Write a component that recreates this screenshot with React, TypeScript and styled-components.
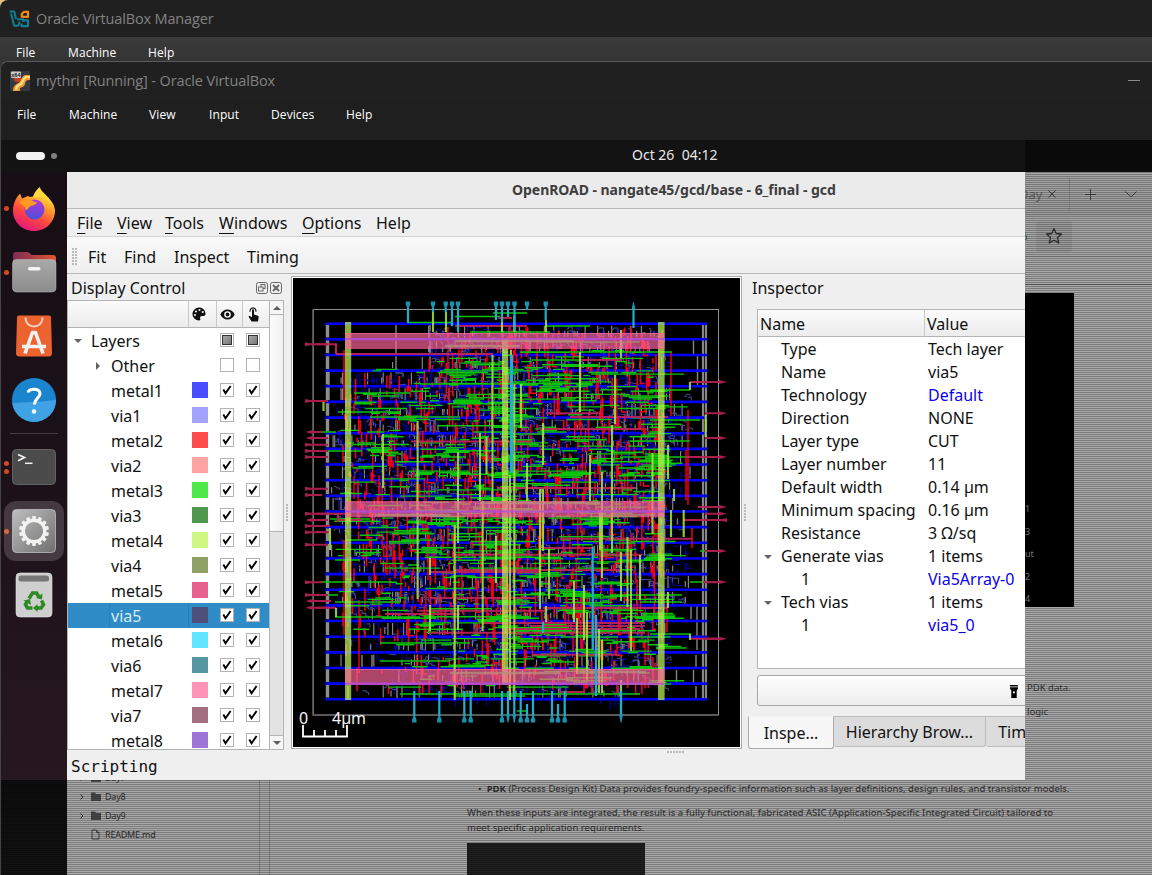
import React from 'react';
import styled, { createGlobalStyle, css } from 'styled-components';

const Global = createGlobalStyle`
  *, *::before, *::after { box-sizing: border-box; }
  html, body { margin: 0; padding: 0; }
  body { font-family: "Noto Sans", "Open Sans", sans-serif; background: #202020; overflow: hidden; }
`;

/* ---------- host windows ---------- */

const Screen = styled.div`
  width: 1152px;
  height: 875px;
  display: flex;
  flex-direction: column;
  overflow: hidden;
  background: linear-gradient(135deg, #e8c07a 0 8px, #353535 8px);
`;

const HostTitle = styled.div<{ $h: number; $pad: number }>`
  height: ${p => p.$h}px;
  flex: none;
  display: flex;
  align-items: center;
  gap: 6px;
  padding-left: ${p => p.$pad}px;
  background: #202020;
  border-top-left-radius: 8px;
  color: #828282;
  font-family: "Open Sans", "Noto Sans", sans-serif;
  font-size: 14.5px;
  white-space: nowrap;
`;

const HostTitleText = styled.span<{ $ls: number }>`
  letter-spacing: ${p => p.$ls}px;
`;

const MinimizeMark = styled.span`
  width: 12px;
  height: 1px;
  background: #8a8a8a;
  margin: 0 12px 0 auto;
`;

const HostMenu = styled.div<{ $h: number; $pad: number; $top: number; $raised?: boolean }>`
  height: ${p => p.$h}px;
  flex: none;
  display: flex;
  align-items: flex-start;
  padding: ${p => p.$top}px 0 0 ${p => p.$pad}px;
  background: ${p => (p.$raised ? 'linear-gradient(#3b3b3b, #343434)' : '#1f1f1f')};
  color: #fff;
  font-family: "Open Sans", "Noto Sans", sans-serif;
  font-size: 12px;
  letter-spacing: 0.1px;
  line-height: 16px;
  white-space: nowrap;
`;

const HostMenuItem = styled.span<{ $w: number }>`
  width: ${p => p.$w}px;
  flex: none;
`;

const VmWindow = styled.div`
  flex: 1;
  min-height: 0;
  display: flex;
  flex-direction: column;
  border-top: 1px solid #5a5a5a;
  border-left: 1px solid #454545;
  border-top-left-radius: 8px;
  background: #202020;
  overflow: hidden;
`;

/* ---------- guest desktop ---------- */

const scanlines = css`
  position: relative;
  overflow: hidden;
  &::after {
    content: '';
    position: absolute;
    inset: 0;
    background: repeating-linear-gradient(rgba(0, 0, 0, 0.27) 0 1px, transparent 1px 2px);
    pointer-events: none;
  }
`;

const GuestTopBar = styled.div`
  height: 32px;
  flex: none;
  display: flex;
`;

const TopBarMain = styled.div`
  width: 1024px;
  background: #131313;
  display: flex;
  align-items: center;
  padding-left: 15px;
  color: #e8e8e8;
  font-size: 14px;
`;

const TopBarStale = styled.div`
  flex: 1;
  background: #0b0b0b;
  ${scanlines}
`;

const Pill = styled.span`
  width: 29px;
  height: 8px;
  border-radius: 4px;
  background: #f2f2f2;
`;

const Dot = styled.span`
  width: 6px;
  height: 6px;
  border-radius: 3px;
  background: #808080;
  margin-left: 6px;
`;

const Clock = styled.span`
  margin-left: 575px;
  white-space: pre;
  padding-bottom: 3px;
`;

const GuestUpper = styled.div`
  height: 608px;
  flex: none;
  display: flex;
`;

const GuestLower = styled.div`
  height: 95px;
  flex: none;
  display: flex;
`;

const Dock = styled.div`
  width: 66px;
  flex: none;
  padding-top: 4px;
  background: linear-gradient(#170f15, #1a1017 40%, #27171f);
`;

const DockCell = styled.div`
  height: 64px;
  display: flex;
  align-items: center;
`;

const DockMarks = styled.div`
  width: 11px;
  padding-left: 3px;
  display: flex;
  flex-direction: column;
  gap: 3px;
`;

const DockMark = styled.span`
  width: 5px;
  height: 5px;
  border-radius: 3px;
  background: #d9481c;
`;

const DockIcon = styled.div<{ $active?: boolean }>`
  width: ${p => (p.$active ? 60 : 44)}px;
  height: ${p => (p.$active ? 60 : 44)}px;
  margin-left: ${p => (p.$active ? -8 : 0)}px;
  border-radius: 12px;
  background: ${p => (p.$active ? 'rgba(255,255,255,0.17)' : 'none')};
  display: grid;
  place-items: center;
  svg { display: block; overflow: visible; }
`;

const DockRule = styled.div`
  height: 1px;
  margin: 1px 9px;
  background: #453c42;
`;

const DockFaded = styled.div`
  width: 66px;
  flex: none;
  background: linear-gradient(#0d0d0d, #121212);
  ${scanlines}
`;

/* ---------- stale browser content ---------- */

const StaleSide = styled.div`
  flex: 1;
  background: #a8a8a8;
  ${scanlines}
  display: flex;
  flex-direction: column;
  color: #3a3a3a;
`;

const StaleTabs = styled.div`
  height: 44px;
  display: flex;
  align-items: center;
  background: linear-gradient(#a6a6a6, #9c9c9c);
  color: #666;
  font-size: 13px;
  svg { flex: none; }
`;

const StaleTab = styled.div`
  width: 45px;
  height: 36px;
  display: flex;
  align-items: center;
  gap: 6px;
  border-right: 1px solid #8c8c8c;
  border-radius: 0 4px 4px 0;
  overflow: hidden;
`;

const TabLabel = styled.span`
  margin-left: -6px;
`;

const StaleAddress = styled.div`
  height: 40px;
  display: flex;
  align-items: center;
  font-size: 10px;
  background: #a6a6a6;
`;

const StarBox = styled.div`
  width: 36px;
  height: 31px;
  margin-left: 9px;
  background: #9b9b9b;
  border-radius: 3px;
  display: grid;
  place-items: center;
`;

const StaleBlack = styled.div`
  width: 49px;
  height: 314px;
  background: #000;
  color: #777;
  font-size: 9px;
  line-height: 12px;
  position: relative;
  z-index: 1;
  padding-top: 210px;
  display: flex;
  flex-direction: column;
  gap: 10.5px;
`;

const StaleGap = styled.div`
  height: 37px;
  border-top: 1px solid #8f8f8f;
  border-bottom: 0;
  padding-top: 27px;
  &::before { content: ''; display: block; height: 1px; background: #707070; }
`;

const StaleNote = styled.div<{ $top: number }>`
  margin: ${p => p.$top}px 0 0 2px;
  font-size: 9.5px;
  line-height: 12px;
  white-space: nowrap;
`;

const StaleBottom = styled.div`
  flex: 1;
  background: #a8a8a8;
  ${scanlines}
  display: flex;
  color: #303030;
`;

const FileTree = styled.div`
  width: 193px;
  border-right: 1px solid #868686;
  margin-top: -12px;
  font-size: 9px;
  letter-spacing: -0.2px;
`;

const FileRow = styled.div`
  height: 19px;
  display: flex;
  align-items: center;
  padding-left: 12px;
`;

const FileGlyph = styled.span<{ $w: number }>`
  width: ${p => p.$w}px;
  display: flex;
`;

const Gutter = styled.div`
  width: 10px;
  border-right: 1px solid #868686;
`;

const Article = styled.div`
  padding-left: 197px;
  font-size: 9.5px;
  line-height: 15px;
  letter-spacing: 0.04px;
  white-space: nowrap;
`;

const Bullet = styled.div`
  padding: 1px 0 0 11px;
`;

const Para = styled.div`
  padding-top: 9px;
`;

const CodeBlock = styled.div`
  width: 178px;
  height: 40px;
  margin-top: 8px;
  background: #202020;
`;

/* ---------- OpenROAD window ---------- */

const AppWindow = styled.div`
  width: 958px;
  flex: none;
  background: #efefef;
  overflow: hidden;
  display: flex;
  flex-direction: column;
  color: #111;
  font-size: 16px;
  white-space: nowrap;
`;

const AppTitle = styled.div`
  height: 37px;
  flex: none;
  background: #ebebeb;
  border-bottom: 1px solid #b9b9b9;
  color: #3d3d3d;
  font-size: 14px;
  font-weight: 700;
  letter-spacing: -0.05px;
  line-height: 35px;
  padding-left: 445px;
`;

const AppMenu = styled.div`
  height: 28px;
  flex: none;
  display: flex;
  padding: 2px 0 0 10px;
  line-height: 24px;
  border-bottom: 1px solid #d2d2d2;
  u { text-decoration-thickness: 1px; text-underline-offset: 4px; }
`;

const Pitch = styled.span<{ $w: number }>`
  width: ${p => p.$w}px;
  flex: none;
`;

const AppTools = styled.div`
  height: 37px;
  flex: none;
  display: flex;
  align-items: center;
  line-height: 32px;
  padding-top: 3px;
  background: linear-gradient(#f9f9f9, #eee);
  border-bottom: 1px solid #b9b9b9;
`;

const Grip = styled.span<{ $w: number; $h: number }>`
  width: ${p => p.$w}px;
  height: ${p => p.$h}px;
  background: radial-gradient(circle at 1px 1px, #b9b9b9 0.7px, transparent 0.9px) 0 0 / 3px 3px;
`;

const AppBody = styled.div`
  height: 476px;
  flex: none;
  display: flex;
`;

const LeftPane = styled.div`
  width: 217px;
  flex: none;
  display: flex;
  flex-direction: column;
`;

const PaneHead = styled.div`
  height: 26px;
  flex: none;
  display: flex;
  align-items: center;
  gap: 2px;
  padding: 2px 2px 0 4px;
`;

const PaneTitle = styled.span`
  flex: 1;
`;

const Tree = styled.div`
  flex: 1;
  min-height: 0;
  display: flex;
  border: 1px solid #b4b4b4;
  background: #fff;
  overflow: hidden;
`;

const TreeMain = styled.div`
  width: 201px;
  flex: none;
`;

const TreeHead = styled.div`
  height: 27px;
  display: flex;
  background: linear-gradient(#fbfbfb, #ececec);
  border-bottom: 1px solid #b4b4b4;
`;

const TreeHeadCell = styled.div<{ $w: number; $last?: boolean }>`
  width: ${p => p.$w}px;
  flex: none;
  border-right: ${p => (p.$last ? 'none' : '1px solid #c8c8c8')};
  display: flex;
  align-items: center;
  padding-left: ${p => (p.$last ? 5 : 3)}px;
`;

const LayerRow = styled.div<{ $sel?: boolean }>`
  height: 25px;
  display: flex;
  align-items: flex-start;
  background: ${p => (p.$sel ? '#308cc6' : 'transparent')};
  color: ${p => (p.$sel ? '#d8ecfa' : '#111')};
`;

const LayerName = styled.span<{ $indent: number; $sel?: boolean }>`
  width: 121px;
  flex: none;
  height: 25px;
  line-height: 26px;
  display: flex;
  align-items: center;
  padding-left: ${p => p.$indent}px;
  ${p => p.$sel && css`
    background: linear-gradient(90deg, transparent 41px, #2a7fb5 41px 42px, transparent 42px 120px, #2a7fb5 120px);
  `}
`;

const Arrow = styled.span<{ $open?: boolean; $space: number }>`
  width: ${p => p.$space}px;
  flex: none;
  &::before {
    content: '';
    display: block;
    width: 0;
    height: 0;
    border-style: solid;
    border-color: transparent;
    ${p => p.$open
      ? css`border-width: 4px 4px 0; border-top-color: #636363;`
      : css`border-width: 4px 0 4px 4px; border-left-color: #636363; margin-left: 1px;`}
  }
`;

const SwatchCell = styled.span<{ $c?: string }>`
  width: 16px;
  height: 16px;
  margin: 4px 12px 0 3px;
  flex: none;
  background: ${p => p.$c || 'transparent'};
`;

const CheckBox = styled.span`
  width: 14px;
  height: 14px;
  margin: 5px 12px 0 0;
  flex: none;
  background: #fff;
  border: 1px solid #b3b3b3;
  display: grid;
  place-items: center;
`;

const PartialMark = styled.span`
  width: 10px;
  height: 10px;
  border: 1px solid #333;
  background: linear-gradient(135deg, #a8a8a8, #777);
`;

const ScrollBar = styled.div`
  flex: 1;
  border-left: 1px solid #b4b4b4;
  display: flex;
  flex-direction: column;
  background: #e3e3e3;
`;

const ScrollStep = styled.div<{ $up?: boolean }>`
  height: 14px;
  flex: none;
  display: flex;
  justify-content: center;
  align-items: center;
  background: #f6f6f6;
  border: 0 solid #b4b4b4;
  border-bottom-width: ${p => (p.$up ? 1 : 0)}px;
  border-top-width: ${p => (p.$up ? 0 : 1)}px;
  &::before {
    content: '';
    border: 4px solid transparent;
    border-top-width: ${p => (p.$up ? 0 : 4)}px;
    border-bottom-width: ${p => (p.$up ? 4 : 0)}px;
    border-bottom-color: ${p => (p.$up ? '#5c5c5c' : 'transparent')};
    border-top-color: ${p => (p.$up ? 'transparent' : '#5c5c5c')};
  }
`;

const ScrollThumb = styled.div`
  height: 217px;
  background: linear-gradient(90deg, #fcfcfc, #f0f0f0);
  border-bottom: 1px solid #b4b4b4;
`;

const ScrollTrack = styled.div`
  flex: 1;
`;

const SplitHandle = styled.div<{ $w: number }>`
  width: ${p => p.$w}px;
  flex: none;
  display: flex;
  align-items: center;
  justify-content: center;
`;

const CanvasFrame = styled.div`
  width: 451px;
  height: 473px;
  margin-top: 2px;
  flex: none;
  border: 1px solid #aaa;
  padding: 1px;
  background: #fff;
`;

const CanvasInner = styled.div`
  width: 447px;
  height: 469px;
  background: #000;
  svg { display: block; }
`;

const RightPane = styled.div`
  flex: none;
  width: 330px;
  display: flex;
  flex-direction: column;
`;

const InspectorHead = styled.div`
  height: 35px;
  padding: 2px 0 0 4px;
  line-height: 25px;
`;

const PropTable = styled.div`
  margin-left: 9px;
  height: 360px;
  border: 1px solid #b4b4b4;
  background: #fff;
`;

const PropHead = styled.div`
  height: 27px;
  display: flex;
  line-height: 28px;
  background: linear-gradient(#fbfbfb, #ececec);
  border-bottom: 1px solid #b4b4b4;
  margin-bottom: 1px;
`;

const PropHeadCell = styled.div<{ $w: number }>`
  width: ${p => p.$w}px;
  flex: none;
  padding-left: 2px;
  border-right: 1px solid #c8c8c8;
`;

const PropRow = styled.div`
  height: 23px;
  display: flex;
  line-height: 23px;
`;

const PropName = styled.div<{ $indent: number }>`
  width: 170px;
  padding-left: ${p => p.$indent}px;
  display: flex;
  align-items: center;
`;

const PropValue = styled.div<{ $link?: boolean }>`
  color: ${p => (p.$link ? '#0c00f0' : '#111')};
`;

const ActionButton = styled.div`
  height: 31px;
  margin: 6px 0 0 9px;
  border: 1px solid #a9a9a9;
  border-radius: 3px;
  background: linear-gradient(#fff, #ededed);
  padding: 6px 0 0 251px;
  flex: none;
`;

const TabStrip = styled.div`
  display: flex;
  margin-top: 10px;
  height: 33px;
`;

const PaneTab = styled.div<{ $w: number; $on?: boolean }>`
  width: ${p => p.$w}px;
  height: ${p => (p.$on ? 33 : 31)}px;
  line-height: ${p => (p.$on ? 32 : 30)}px;
  flex: none;
  text-align: center;
  border: 1px solid ${p => (p.$on ? '#aaa' : '#bcbcbc')};
  border-top-color: ${p => (p.$on ? '#f4f4f4' : '#bcbcbc')};
  border-left-width: ${p => (p.$on ? 1 : 0)}px;
  border-radius: 0 0 3px 3px;
  background: ${p => (p.$on ? '#f7f7f7' : '#dcdcdc')};
  overflow: hidden;
`;

const ScriptingBar = styled.div`
  flex: 1;
  display: flex;
  align-items: flex-start;
  justify-content: space-between;
  padding: 1px 341px 0 4px;
  font-family: "DejaVu Sans Mono", "Liberation Mono", monospace;
  font-size: 16px;
  line-height: 32px;
`;

/* ---------- chip drawing ---------- */

function rng(seed: number) {
  let s = seed;
  return () => {
    s ^= s << 13;
    s ^= s >>> 17;
    s ^= s << 5;
    return (s >>> 0) / 4294967296;
  };
}

const ROW_Y = (i: number) => 323.7 + i * 15.65;
const TRACK = 1.565;
const snap = (v: number, o: number) => o + Math.round((v - o) / TRACK) * TRACK;

type Seg = [number, number, number];

function density(x: number, y: number) {
  if (x < 428 && y < 368) return 0;
  if (x < 338 && y > 560) return 0;
  if (x > 690) return 0;
  if (x > 666 && (y < 395 || y > 605)) return 0;
  if (x > 666) return 0.35;
  if (x < 390 && y > 640) return 0.12;
  if (y > 686 && x > 628) return 0;
  const dx = (x - 530) / 200;
  const dy = (y - 495) / 215;
  const d = dx * dx + dy * dy;
  return Math.max(0.15, Math.min(1, 1.3 - d * 0.8));
}

function scatter(seed: number, n: number, x0: number, x1: number, y0: number, y1: number, emit: (x: number, y: number, r: () => number) => string) {
  const r = rng(seed);
  let out = '';
  for (let i = 0; i < n; i++) {
    const x = x0 + r() * (x1 - x0);
    const y = y0 + r() * (y1 - y0);
    if (r() < density(x, y)) out += emit(x, y, r);
  }
  return out;
}

const f = (n: number) => n.toFixed(1);

const grays = scatter(1181, 1500, 331, 692, 324, 698, (x, y, r) => {
  const row = Math.floor((y - 323.7) / 15.65);
  const full = r() < 0.5;
  return `M${f(snap(x, 330))} ${f(ROW_Y(row) + (full ? 2 : 7))}v${full ? 12 : 6}`;
});
const navy = scatter(2357, 4800, 338, 688, 326, 698, (x, y, r) =>
  r() < 0.65 ? `M${f(snap(x, 330))} ${f(y)}v${f(4 + r() * 8)}` : `M${f(x)} ${f(y)}h${f(2 + r() * 7)}`);
const slate = scatter(3779, 1300, 333, 688, 328, 694, (x, y, r) =>
  `M${f(x)} ${f(y)}h${f(1 + r() * 4)}v${f(r() * 6 - 3)}h${f(1 + r() * 4)}v${f(r() * 6)}`);
const reds = scatter(4111, 1250, 343, 664, 326, 686, (x, y, r) => {
  const len = 4 + r() * r() * 34;
  return `M${f(snap(x, 343))} ${f(y)}V${f(Math.min(y + len, 694))}${r() < 0.12 ? `h${f(2 + r() * 5)}` : ''}`;
});
const greens = scatter(5903, 620, 334, 650, 350, 690, (x, y, r) =>
  `M${f(x)} ${f(snap(y, 324))}h${f(Math.min(5 + r() * r() * 62, 690 - x))}`)
  + scatter(6701, 130, 345, 645, 355, 688, (x, y, r) => {
    let s = '';
    const k = 2 + Math.floor(r() * 3);
    for (let i = 0; i < k; i++) s += `M${f(x + r() * 16)} ${f(snap(y + i * TRACK, 324))}h${f(8 + r() * 26)}`;
    return s;
  });

const longGreens: Seg[] = [
  [322.5, 408, 451], [393, 354, 410], [417, 370, 460], [316.5, 455, 500], [434, 500, 545], [451, 320, 362],
  [488, 510, 527], [582, 320, 392], [432, 316, 336], [551, 700, 716], [582, 690, 710], [390, 650, 690],
  [342, 545, 640], [352, 520, 672], [493.5, 340, 362], [634, 650, 691], [643, 380, 470], [694, 400, 640],
  [696, 455, 525], [661, 380, 450], [313, 493, 527], [332, 470, 550], [457, 620, 690], [441, 630, 690],
  [412, 338, 400], [519, 330, 370], [560, 335, 360], [602, 335, 400], [617, 335, 420], [711, 517, 527],
  [326, 545, 590], [384, 420, 500], [602, 640, 682], [595, 610, 682], [420, 650, 700], [595, 318, 338],
];

const limes: Seg[] = [
  [433, 312, 332], [446, 312, 332], [492.5, 355, 501], [417.6, 421, 599], [383, 434, 488], [458, 452, 543],
  [480, 433, 501], [486.5, 437, 474], [323.5, 401, 411], [514.3, 384, 700], [330, 528, 550], [454.7, 525, 700],
  [482.7, 501, 631], [430, 558, 575], [430, 605, 631], [336, 608, 617], [510, 475, 700], [496, 536, 583],
  [521, 384, 428], [543, 423, 465], [580, 352, 412], [615, 375, 424], [612, 425, 553], [527, 463, 501],
  [590, 455, 501], [602, 472, 578], [652.5, 453, 534], [668, 445, 479], [705.7, 415, 437], [674, 489, 501],
  [621, 330, 358], [690, 382, 390], [540, 489, 609], [549, 549, 599], [543, 489, 551], [600, 510, 550],
  [621, 552, 601], [627.5, 537, 607], [631, 550, 651], [640, 555, 600], [574, 581, 622], [584, 585, 640],
  [577, 618, 674], [587, 612, 680], [599, 629, 693], [602, 640, 693], [546, 606, 622], [668, 592, 608],
  [683.7, 510, 537], [671, 510, 537], [690, 634, 640], [621, 680, 714], [511, 350, 470], [458, 605, 630],
  [514.3, 316, 332], [502, 316, 332], [546, 320, 332],
];

const crimsons: Seg[] = [
  [354, 336, 493], [344.3, 316, 337], [441.5, 411, 530], [326, 455, 527], [318, 498, 512], [413.3, 546, 603],
  [417, 570, 668], [429, 540, 643], [360, 579, 622], [488, 498, 636], [382, 690, 718], [507, 698, 718],
  [520, 683, 718], [457, 685, 718], [554.7, 452, 642], [572, 430, 540], [570, 453, 622], [598, 430, 535],
  [610.7, 417, 545], [614, 385, 460], [632.7, 430, 645], [623, 483, 645], [538.7, 560, 692], [548, 543, 592],
  [608, 543, 668], [654.7, 532, 620], [692, 560, 585], [638.7, 690, 718], [626, 530, 645], [629, 510, 640],
  [513.7, 316, 345], [520, 338, 362], [526, 316, 330], [532, 316, 330], [582.3, 703, 718], [601, 316, 331], [607.7, 316, 336],
];

const topPins: Seg[] = [
  [408, 308, 323], [433, 308, 312], [445.7, 308, 312], [452, 308, 326], [458, 308, 332], [496, 308, 320],
  [502, 308, 322], [508, 308, 317], [514.5, 308, 331], [527, 303, 310], [545.7, 308, 320],
];
const bottomPins: { x: number; down?: boolean }[] = [
  { x: 414.3 }, { x: 439.3 }, { x: 464.3 }, { x: 470.7 }, { x: 502 }, { x: 508, down: true }, { x: 514.3, down: true },
  { x: 520.7 }, { x: 527 }, { x: 533 }, { x: 552 }, { x: 558 }, { x: 564.7 }, { x: 621, down: true },
];
const leftPins = [344.3, 401, 432, 438, 444.7, 451, 457, 488.7, 495, 513.7, 520, 526, 532.3, 544.7, 582.3, 595, 601, 607.7];
const rightPins = [382, 413.3, 438, 457, 507, 513.7, 520, 551, 582, 638.7];
const outwardLeft = new Set([432, 438, 520, 601, 607.7]);

const hPath = (list: Seg[]) => list.map(([y, a, b]) => `M${a} ${y}H${b}`).join('');
const vPath = (list: Seg[]) => list.map(([x, a, b]) => `M${x} ${a}V${b}`).join('');

function ChipLayout() {
  const rows = Array.from({ length: 25 }, (_, i) => ROW_Y(i));
  return (
    <svg width="447" height="469" viewBox="293 278 447 469" fill="none">
      <rect x="313.5" y="309.5" width="405" height="405.5" stroke="#8d8d8d" strokeWidth="1" />
      <path d="M313 309V715H718" stroke="#5f5f5f" strokeWidth="1.6" />
      <path d="M327.5 324V699" stroke="#8e8e8e" strokeWidth="3.4" strokeDasharray="13.6 2.05" />
      <path d="M703 324V699M706 324V699" stroke="#858589" strokeWidth="2.2" />
      <path d="M396 325V369M430 325V369M693.5 340V354M697.500 356V385M691 605V619M697 605V650M696 655V667M693.500 670V683M676.500 670V683M696 686V698M329 370V400M362 655V667M372 655V667M348 686V698M397 686V698" stroke="#858589" strokeWidth="1.4" />
      <path d={grays} stroke="#83838b" strokeWidth="1.2" />
      <path d={navy} stroke="#0000a4" strokeWidth="1.1" />
      <path d={slate} stroke="#50509c" strokeWidth="0.9" />
      <path d={rows.map(y => `M325.5 ${f(y)}H707`).join('')} stroke="#0000fa" strokeWidth="2.6" />
      <path d={reds} stroke="#f20010" strokeWidth="1.5" />
      <path d="M671 352V416M688 410V505M686 450V500M667 600V632M344 350V400M344 540V635M358 480V520M359 600V673M428 545V580M395 550V578M387 530V575M692 528V548" stroke="#e80012" strokeWidth="1.5" />
      <path d={greens + hPath(longGreens)} stroke="#08c405" strokeWidth="1.4" />
      <path d={hPath(crimsons)} stroke="#c02257" strokeWidth="2" opacity="0.92" />
      <path d="M336 344V354M338 513V522" stroke="#c02257" strokeWidth="2" />
      <path d={vPath(limes)} stroke="#a4e33f" strokeWidth="2.1" opacity="0.88" />
      <rect x="345" y="322" width="6.2" height="378" fill="#c4f955" opacity="0.7" />
      <rect x="502" y="338" width="6.2" height="347" fill="#c4f955" opacity="0.7" />
      <rect x="658" y="322" width="6.6" height="378" fill="#c4f955" opacity="0.7" />
      {[333, 501.3, 669].map(y => (
        <g key={y}>
          <rect x="345" y={y} width="319.5" height="16" fill="#ff6699" opacity="0.68" />
          <path d={`M345 ${y + 0.5}H664.5`} stroke="#ff6e9c" strokeWidth="1" opacity="0.6" />
        </g>
      ))}
      <path d="M345 339H664M345 683.8H664M345 511.5H664" stroke="#b44fd0" strokeWidth="2" opacity="0.85" />
      <path d="M455 341H574M445 346H520M450 673H560M580 672H646M480 503H600M375 515H450" stroke="#b8907a" strokeWidth="2.4" opacity="0.75" />
      <g stroke="#1fb0d0" strokeWidth="2.2">
        <path d={vPath(topPins)} />
        <path d={bottomPins.map(p => `M${p.x} ${p.x === 527 || p.x === 558 ? 704 : 691}V716`).join('')} />
        <path d="M633.5 306V328M543 622V633" />
        <path d="M511.5 355V473" strokeWidth="3" />
        <path d="M592.7 547V650M596 615V696" />
      </g>
      <g fill="#1b93ae">
        {topPins.map(([x]) => <path key={x} d={`M${x - 2.2} 301.5h4.4v3l-1.6 4h-1.2l-1.6-4z`} />)}
        {bottomPins.map(({ x, down }) => (
          <path key={x} d={down ? `M${x - 2} 714h4l-1.5 8.5h-1z` : `M${x - 2.2} 722.5h4.4v-3l-1.6-4h-1.2l-1.6 4z`} />
        ))}
        <path d="M631.8 309l1.2-7h.8l1.4 7z" />
      </g>
      <path d={[...leftPins.map(y => `M308 ${y}H${[495, 582.3, 432].includes(y) ? 322 : 328}`), ...rightPins.map(y => `M705 ${y}H721`)].join('')} stroke="#a81d4c" strokeWidth="1.9" />
      <g fill="#a81d4c">
        {leftPins.map(y => (
          <path key={y} d={outwardLeft.has(y) ? `M305.5 ${y}l7-2v4z` : `M305 ${y - 2}l7 1.6v.8l-7 1.6z`} />
        ))}
        {rightPins.map(y => (
          <path key={y} d={y === 520 ? `M727 ${y - 2}l-8 1.6v.8l8 1.6z` : `M727 ${y}l-8-2v4z`} />
        ))}
      </g>
      <path d="M303 725V736.500H347V725M314 730V736M325 730V736M336 730V736" stroke="#fff" strokeWidth="1.8" />
      <text x="299" y="724" fill="#f4f4f4" fontFamily="Noto Sans, sans-serif" fontSize="16">0</text>
      <text x="332" y="724" fill="#f4f4f4" fontFamily="Noto Sans, sans-serif" fontSize="16">4µm</text>
    </svg>
  );
}

/* ---------- icons ---------- */

const VirtualBoxLogo = () => (
  <svg width="21" height="18" viewBox="0 0 21 18" fill="none" strokeLinejoin="round">
    <path d="M0.800 1.500h4.400l1.800 7.500M2 3.500l3.200 12.300h4.300M8 9.200h6v2.500M9.500 15.800l1.200-4.300" stroke="#0c7f92" strokeWidth="2" />
    <path d="M14 10.300h5v5.800h-6.400v-2.600" stroke="#0c7f92" strokeWidth="2.200" />
    <path d="M12.800 6.700V4l2.200-2.200h4v5z" stroke="#f08b17" strokeWidth="2.200" />
  </svg>
);

const VmLogo = () => (
  <svg width="20" height="20" viewBox="0 0 20 20">
    <rect width="20" height="20" fill="#36393f" />
    <circle cx="7.500" cy="7.500" r="3.500" fill="#c9401c" />
    <path d="M3 20c0-5 3-7 5.500-8C11 10.500 11.500 5 15 4h5v5c-4 0-4.500 1.500-5 4-.6 3-3 3-5 4v3z" fill="#f29a2e" />
    <path d="M6 19c0-4 3-5 5-6 2-1.500 2-6 5-7h4" stroke="#ffe08a" strokeWidth="2.200" fill="none" />
    <rect x="1" y="0.500" width="10" height="6.500" rx="1" fill="#c9c9c9" />
    <text x="1.300" y="6" fontSize="5.500" fontWeight="700" fontFamily="Liberation Sans, sans-serif" fill="#222">x64</text>
  </svg>
);

const FirefoxIcon = () => (
  <svg width="44" height="49" viewBox="0 0 44 49">
    <defs>
      <linearGradient id="ffA" x1="0.8" y1="0" x2="0.3" y2="1">
        <stop offset="0.1" stopColor="#fff04d" /><stop offset="0.35" stopColor="#ffa72c" />
        <stop offset="0.65" stopColor="#ff4a3d" /><stop offset="1" stopColor="#e2147f" />
      </linearGradient>
      <linearGradient id="ffB" x1="0.5" y1="0" x2="0.4" y2="1">
        <stop offset="0" stopColor="#b437dc" /><stop offset="1" stopColor="#4a50d8" />
      </linearGradient>
    </defs>
    <path d="M22 45C10 45 1 36 1 24.500 1 18 3.500 12.500 8 7.500l2 5 6-2.500 2 1 3-.5c1-3 3.500-7 7-9.500 0 5 5 7.500 8 10.500 4 4 6.500 7.500 7 13C43 36 34 45 22 45z" fill="url(#ffA)" />
    <circle cx="22.500" cy="23.500" r="10" fill="url(#ffB)" />
    <path d="M7.500 17c2-3.500 6.500-4.500 10-3.500 3 .8 4 2.500 7.500 2.800-1 3-4.500 3.200-7 4.200-2 1-1.500 3.500-4.500 3.500C14 22 11 18 7.500 17z" fill="#ff9a22" />
    <path d="M21 11c4-4.500 6-7 6.500-10 1.500 5 9 8 11.500 16-2-2-5-4.500-8-5.500-3-1-7-.5-10-.5z" fill="#ffd93b" />
  </svg>
);

const FilesIcon = () => (
  <svg width="44" height="42" viewBox="0 0 44 42">
    <defs>
      <linearGradient id="flA"><stop offset="0" stopColor="#7d2c57" /><stop offset="1" stopColor="#e2552c" /></linearGradient>
      <linearGradient id="flB" x2="0" y2="1"><stop offset="0" stopColor="#a9a9a9" /><stop offset="1" stopColor="#8c8c8c" /></linearGradient>
    </defs>
    <path d="M1 12V4q0-3 3-3h11q2 0 3 1.500T21 4h20q3 0 3 3v8H1z" fill="url(#flA)" />
    <rect x="0.500" y="8.500" width="43.500" height="32.500" rx="4" fill="url(#flB)" stroke="#bdbdbd" strokeWidth="0.500" />
    <rect x="16" y="16" width="12.500" height="3.600" rx="1.800" fill="#f5f5f5" />
  </svg>
);

const SoftwareIcon = () => (
  <svg width="36" height="42" viewBox="0 0 36 42">
    <path d="M3 0.500h30q2 0 2 2L36 38q0 3.500-3.500 3.500h-29Q0 41.500 0 38L1 2.500q0-2 2-2z" fill="#ec6330" />
    <path d="M9.500 2.500c0 12 17 12 17 0" fill="none" stroke="#f7cfc0" strokeWidth="1.800" />
    <path d="M9 38.500L16.500 17.500h3L27 38.500M6 31.500h24" fill="none" stroke="#f5f3f1" strokeWidth="3.600" strokeLinejoin="round" />
  </svg>
);

const HelpIcon = () => (
  <svg width="44" height="44" viewBox="0 0 44 44">
    <circle cx="22" cy="22" r="22" fill="#1b84cf" />
    <path d="M0 22a22 22 0 0 0 44 0C30 24 14 24 0 25z" fill="#3fa2e4" />
    <path d="M16 14.500c1-4 11.500-5 12 1 .2 4-5.500 5-5.500 11" fill="none" stroke="#fff" strokeWidth="3" />
    <circle cx="22" cy="33.500" r="2.200" fill="#fff" />
  </svg>
);

const TerminalIcon = () => (
  <svg width="44" height="36" viewBox="0 0 44 36">
    <rect x="0.500" y="0.500" width="43" height="35" rx="4" fill="#4b4b4b" stroke="#626262" />
    <path d="M6 5.500l6.500 3-6.500 3.200" fill="none" stroke="#f2f2f2" strokeWidth="1.700" />
    <path d="M13 14.300h7.500" stroke="#f2f2f2" strokeWidth="1.500" />
  </svg>
);

const SettingsIcon = () => (
  <svg width="44" height="44" viewBox="0 0 44 44">
    <defs><linearGradient id="stA" x2="1" y2="1"><stop offset="0" stopColor="#bebebe" /><stop offset="1" stopColor="#707070" /></linearGradient></defs>
    <rect x="0.500" y="0.500" width="43" height="43" rx="4" fill="url(#stA)" stroke="#c9c9c9" strokeWidth="0.700" />
    <circle cx="22" cy="22" r="10.800" fill="none" stroke="#f2f2f0" strokeWidth="3.400" />
    {Array.from({ length: 14 }, (_, i) => (
      <rect key={i} x="20.200" y="7" width="3.600" height="4" rx="0.800" fill="#f2f2f0" transform={`rotate(${i * 25.714} 22 22)`} />
    ))}
  </svg>
);

const TrashIcon = () => (
  <svg width="37" height="46" viewBox="0.500 0.500 37 46">
    <rect x="0.500" y="0.500" width="36" height="44" rx="4" fill="#cfcfcf" stroke="#e2e2e2" strokeWidth="0.600" />
    <rect x="3" y="3" width="30.500" height="6" rx="2.500" fill="#777" />
    <g fill="none" stroke="#2c8a22" strokeWidth="3.600">
      <path d="M13.500 26l3.500-5.500h4l2.500 4" /><path d="M26 28l2 4-2.500 3.500h-4.500" /><path d="M17 35.500h-5l-2-3.500 2-3.500" />
    </g>
    <path d="M20.500 25.500l6 1.500.5-6zM22 31.500v8l-4.500-4zM8 28l6.500-1.500 1 6z" fill="#2c8a22" />
  </svg>
);

const Tick = () => (
  <svg width="10" height="10" viewBox="0 0 10 10">
    <path d="M1.300 4.600l2.200 3.700L8.600 1" fill="none" stroke="#000" strokeWidth="1.900" />
  </svg>
);

const PaletteIcon = () => (
  <svg width="14" height="14" viewBox="0 0 14 14">
    <path d="M7 .5a6.500 6.500 0 0 0-6.500 6.500C.5 10.500 3.500 13.500 7 13.500c1.600 0 1.500-1.200 1.200-2C7.800 10 8.500 9 10 9h1.500c1.500 0 2.200-1 2-2.500C13.200 3 10.500.5 7 .5z" fill="#111" />
    <g fill="#f4f4f4"><circle cx="4" cy="4.500" r="1.100" /><circle cx="7.500" cy="3" r="1.100" /><circle cx="10.800" cy="5" r="1.100" /><circle cx="3" cy="8" r="1.100" /></g>
  </svg>
);

const EyeIcon = () => (
  <svg width="15" height="11" viewBox="0 0 15 11">
    <path d="M.3 5.500C2 2 4.500.6 7.500.6S13 2 14.700 5.500C13 9 10.500 10.400 7.500 10.400S2 9 .3 5.500z" fill="#111" />
    <circle cx="7.500" cy="5.500" r="3.300" fill="#fff" /><circle cx="7.500" cy="5.500" r="1.900" fill="#111" />
  </svg>
);

const TouchIcon = () => (
  <svg width="11" height="15" viewBox="0 0 11 15">
    <path d="M3.500 14.500L.5 9.500l1-.8L4 10.200V3.500c0-1.600 2-1.600 2 0V7.500l4 1.200c.6.200.8.700.7 1.300l-.7 4.500z" fill="#111" />
    <path d="M2.300 4.800a2.900 2.900 0 1 1 5.400 0" fill="none" stroke="#111" strokeWidth="1.100" />
  </svg>
);

const FloatIcon = () => (
  <svg width="12" height="12" viewBox="0 0 12 12" fill="none" stroke="#666" strokeWidth="1">
    <rect x="0.500" y="0.500" width="11" height="11" rx="2" /><rect x="5" y="2.500" width="4" height="4" /><rect x="2.500" y="5" width="4.500" height="4" fill="#efefef" />
  </svg>
);

const CloseIcon = () => (
  <svg width="12" height="12" viewBox="0 0 12 12" fill="none" stroke="#666" strokeWidth="1">
    <rect x="0.500" y="0.500" width="11" height="11" rx="2" /><path d="M3 3l6 6M9 3L3 9" strokeWidth="1.900" />
  </svg>
);

const FlashlightIcon = () => (
  <svg width="10" height="15" viewBox="0 0 10 15">
    <path d="M1 1h8v1.500H1zM1 3.300h8v1.500L7.700 6.500V14H2.300V6.500L1 4.800z" fill="#000" /><rect x="4" y="7.500" width="1.800" height="1.800" fill="#fff" />
  </svg>
);

const PlusGlyph = () => (
  <svg width="11" height="11" viewBox="0 0 11 11"><path d="M5.500 0v11M0 5.500h11" stroke="#454545" /></svg>
);
const DownGlyph = () => (
  <svg width="12" height="7" viewBox="0 0 12 7"><path d="M.5.5L6 6l5.500-5.500" fill="none" stroke="#454545" /></svg>
);
const CrossGlyph = () => (
  <svg width="8" height="8" viewBox="0 0 8 8"><path d="M.5.5l7 7M7.500.5l-7 7" stroke="#3c3c3c" /></svg>
);
const StarGlyph = () => (
  <svg width="18" height="18" viewBox="0 0 18 18"><path d="M9 1.500l2.200 5 5.300.5-4 3.600 1.200 5.400L9 13.200 4.300 16l1.200-5.400-4-3.600 5.300-.5z" fill="none" stroke="#333" strokeWidth="1.300" strokeLinejoin="round" /></svg>
);

/* ---------- data ---------- */

const layers: [string, string][] = [
  ['metal1', '#4a4cff'], ['via1', '#a3a3ff'], ['metal2', '#ff4d4d'], ['via2', '#ffa3a3'], ['metal3', '#4fe84a'],
  ['via3', '#4f974c'], ['metal4', '#d0f784'], ['via4', '#8fa067'], ['metal5', '#e7618f'], ['via5', '#4f4f7b'],
  ['metal6', '#61e4ff'], ['via6', '#5696a2'], ['metal7', '#ff94b8'], ['via7', '#a36f81'], ['metal8', '#9e75d6'],
];

type Prop = { name: string; value: string; link?: boolean; open?: boolean; child?: boolean };
const props: Prop[] = [
  { name: 'Type', value: 'Tech layer' },
  { name: 'Name', value: 'via5' },
  { name: 'Technology', value: 'Default', link: true },
  { name: 'Direction', value: 'NONE' },
  { name: 'Layer type', value: 'CUT' },
  { name: 'Layer number', value: '11' },
  { name: 'Default width', value: '0.14 µm' },
  { name: 'Minimum spacing', value: '0.16 µm' },
  { name: 'Resistance', value: '3 Ω/sq' },
  { name: 'Generate vias', value: '1 items', open: true },
  { name: '1', value: 'Via5Array-0', link: true, child: true },
  { name: 'Tech vias', value: '1 items', open: true },
  { name: '1', value: 'via5_0', link: true, child: true },
];

const dockItems: { icon: React.ReactNode; marks: number; active?: boolean }[] = [
  { icon: <FirefoxIcon />, marks: 1 },
  { icon: <FilesIcon />, marks: 1 },
  { icon: <SoftwareIcon />, marks: 0 },
  { icon: <HelpIcon />, marks: 0 },
  { icon: <TerminalIcon />, marks: 2 },
  { icon: <SettingsIcon />, marks: 1, active: true },
  { icon: <TrashIcon />, marks: 0 },
];

const appMenu: [string, string, number][] = [
  ['F', 'ile', 40], ['V', 'iew', 48], ['T', 'ools', 54], ['W', 'indows', 83], ['O', 'ptions', 74], ['', 'Help', 50],
];

/* ---------- page ---------- */

function DockEntry({ item }: { item: (typeof dockItems)[number] }) {
  return (
    <DockCell>
      <DockMarks>{Array.from({ length: item.marks }, (_, i) => <DockMark key={i} />)}</DockMarks>
      <DockIcon $active={item.active}>{item.icon}</DockIcon>
    </DockCell>
  );
}

function DisplayControl() {
  return (
    <LeftPane>
      <PaneHead><PaneTitle>Display Control</PaneTitle><FloatIcon /><CloseIcon /></PaneHead>
      <Tree>
        <TreeMain>
          <TreeHead>
            <TreeHeadCell $w={121} />
            <TreeHeadCell $w={28}><PaletteIcon /></TreeHeadCell>
            <TreeHeadCell $w={26}><EyeIcon /></TreeHeadCell>
            <TreeHeadCell $w={26} $last><TouchIcon /></TreeHeadCell>
          </TreeHead>
          <LayerRow>
            <LayerName $indent={6}><Arrow $open $space={17} />Layers</LayerName>
            <SwatchCell /><CheckBox><PartialMark /></CheckBox><CheckBox><PartialMark /></CheckBox>
          </LayerRow>
          <LayerRow>
            <LayerName $indent={27}><Arrow $space={16} />Other</LayerName>
            <SwatchCell /><CheckBox /><CheckBox />
          </LayerRow>
          {layers.map(([name, color]) => (
            <LayerRow key={name} $sel={name === 'via5'}>
              <LayerName $indent={43} $sel={name === 'via5'}>{name}</LayerName>
              <SwatchCell $c={color} />
              <CheckBox><Tick /></CheckBox>
              <CheckBox><Tick /></CheckBox>
            </LayerRow>
          ))}
        </TreeMain>
        <ScrollBar>
          <ScrollStep $up />
          <ScrollThumb />
          <ScrollTrack />
          <ScrollStep />
        </ScrollBar>
      </Tree>
    </LeftPane>
  );
}

function Inspector() {
  return (
    <RightPane>
      <InspectorHead>Inspector</InspectorHead>
      <PropTable>
        <PropHead><PropHeadCell $w={167}>Name</PropHeadCell><PropHeadCell $w={160}>Value</PropHeadCell></PropHead>
        {props.map((p, i) => (
          <PropRow key={i}>
            <PropName $indent={p.open ? 6 : p.child ? 43 : 23}>{p.open && <Arrow $open $space={17} />}{p.name}</PropName>
            <PropValue $link={p.link}>{p.value}</PropValue>
          </PropRow>
        ))}
      </PropTable>
      <ActionButton><FlashlightIcon /></ActionButton>
      <TabStrip>
        <PaneTab $w={86} $on>Inspe...</PaneTab>
        <PaneTab $w={152}>Hierarchy Brow...</PaneTab>
        <PaneTab $w={90}>Timing...</PaneTab>
      </TabStrip>
    </RightPane>
  );
}

const FolderGlyph = () => (
  <svg width="10" height="9" viewBox="0 0 10 9"><path d="M0 .5h4l1 1.500h5v7H0z" fill="#4a4a4a" /></svg>
);
const PageGlyph = () => (
  <svg width="9" height="11" viewBox="0 0 9 11"><path d="M1 1h4.500L8 3.500V10H1zM5.500 1v2.500H8" fill="none" stroke="#444" /></svg>
);
const Chevron = () => (
  <svg width="6" height="6" viewBox="0 0 6 6"><path d="M1.500.5L4 3 1.500 5.500" fill="none" stroke="#333" /></svg>
);

export default function App() {
  return (
    <Screen>
      <Global />
      <HostTitle $h={37} $pad={9}>
        <VirtualBoxLogo />
        <HostTitleText $ls={-0.15}>Oracle VirtualBox Manager</HostTitleText>
      </HostTitle>
      <HostMenu $h={24} $pad={16} $top={8} $raised>
        <HostMenuItem $w={52}>File</HostMenuItem>
        <HostMenuItem $w={80}>Machine</HostMenuItem>
        <HostMenuItem $w={60}>Help</HostMenuItem>
      </HostMenu>
      <VmWindow>
        <HostTitle $h={37} $pad={9}>
          <VmLogo />
          <HostTitleText $ls={-0.12}>mythri [Running] - Oracle VirtualBox</HostTitleText>
          <MinimizeMark />
        </HostTitle>
        <HostMenu $h={41} $pad={16} $top={8}>
          <HostMenuItem $w={52}>File</HostMenuItem>
          <HostMenuItem $w={80}>Machine</HostMenuItem>
          <HostMenuItem $w={60}>View</HostMenuItem>
          <HostMenuItem $w={62}>Input</HostMenuItem>
          <HostMenuItem $w={75}>Devices</HostMenuItem>
          <HostMenuItem $w={60}>Help</HostMenuItem>
        </HostMenu>
        <GuestTopBar>
          <TopBarMain><Pill /><Dot /><Clock>{'Oct 26  04:12'}</Clock></TopBarMain>
          <TopBarStale />
        </GuestTopBar>
        <GuestUpper>
          <Dock>
            {dockItems.slice(0, 4).map((item, i) => <DockEntry key={i} item={item} />)}
            <DockRule />
            {dockItems.slice(4).map((item, i) => <DockEntry key={i} item={item} />)}
          </Dock>
          <AppWindow>
            <AppTitle>OpenROAD - nangate45/gcd/base - 6_final - gcd</AppTitle>
            <AppMenu>
              {appMenu.map(([key, rest, w]) => <Pitch key={rest} $w={w}>{key && <u>{key}</u>}{rest}</Pitch>)}
            </AppMenu>
            <AppTools>
              <Pitch $w={5} /><Grip $w={5} $h={17} /><Pitch $w={11} />
              <Pitch $w={36}>Fit</Pitch><Pitch $w={50}>Find</Pitch><Pitch $w={73}>Inspect</Pitch><Pitch $w={60}>Timing</Pitch>
            </AppTools>
            <AppBody>
              <DisplayControl />
              <SplitHandle $w={7}><Grip $w={3} $h={17} /></SplitHandle>
              <CanvasFrame><CanvasInner><ChipLayout /></CanvasInner></CanvasFrame>
              <SplitHandle $w={6}><Grip $w={3} $h={17} /></SplitHandle>
              <Inspector />
            </AppBody>
            <ScriptingBar>Scripting<Grip $w={17} $h={3} /></ScriptingBar>
          </AppWindow>
          <StaleSide>
            <StaleTabs>
              <StaleTab>
                <TabLabel>Day</TabLabel>
                <CrossGlyph />
              </StaleTab>
              <Pitch $w={15} />
              <PlusGlyph />
              <Pitch $w={29} />
              <DownGlyph />
            </StaleTabs>
            <StaleAddress>
              <TabLabel>%</TabLabel>
              <StarBox><StarGlyph /></StarBox>
            </StaleAddress>
            <StaleGap />
            <StaleBlack><span>1</span><span>3</span><span>ut</span><span>2</span><span>4</span></StaleBlack>
            <StaleNote $top={75}>PDK data.</StaleNote>
            <StaleNote $top={12}>logic</StaleNote>
          </StaleSide>
        </GuestUpper>
        <GuestLower>
          <DockFaded />
          <StaleBottom>
            <FileTree>
              {['Day7', 'Day8', 'Day9'].map(d => (
                <FileRow key={d}><FileGlyph $w={12}><Chevron /></FileGlyph><FileGlyph $w={14}><FolderGlyph /></FileGlyph>{d}</FileRow>
              ))}
              <FileRow><FileGlyph $w={12} /><FileGlyph $w={14}><PageGlyph /></FileGlyph>README.md</FileRow>
            </FileTree>
            <Gutter />
            <Article>
              <Bullet>•&nbsp; <b>PDK</b> (Process Design Kit) Data provides foundry-specific information such as layer definitions, design rules, and transistor models.</Bullet>
              <Para>When these inputs are integrated, the result is a fully functional, fabricated ASIC (Application-Specific Integrated Circuit) tailored to<br />meet specific application requirements.</Para>
              <CodeBlock />
            </Article>
          </StaleBottom>
        </GuestLower>
      </VmWindow>
    </Screen>
  );
}
